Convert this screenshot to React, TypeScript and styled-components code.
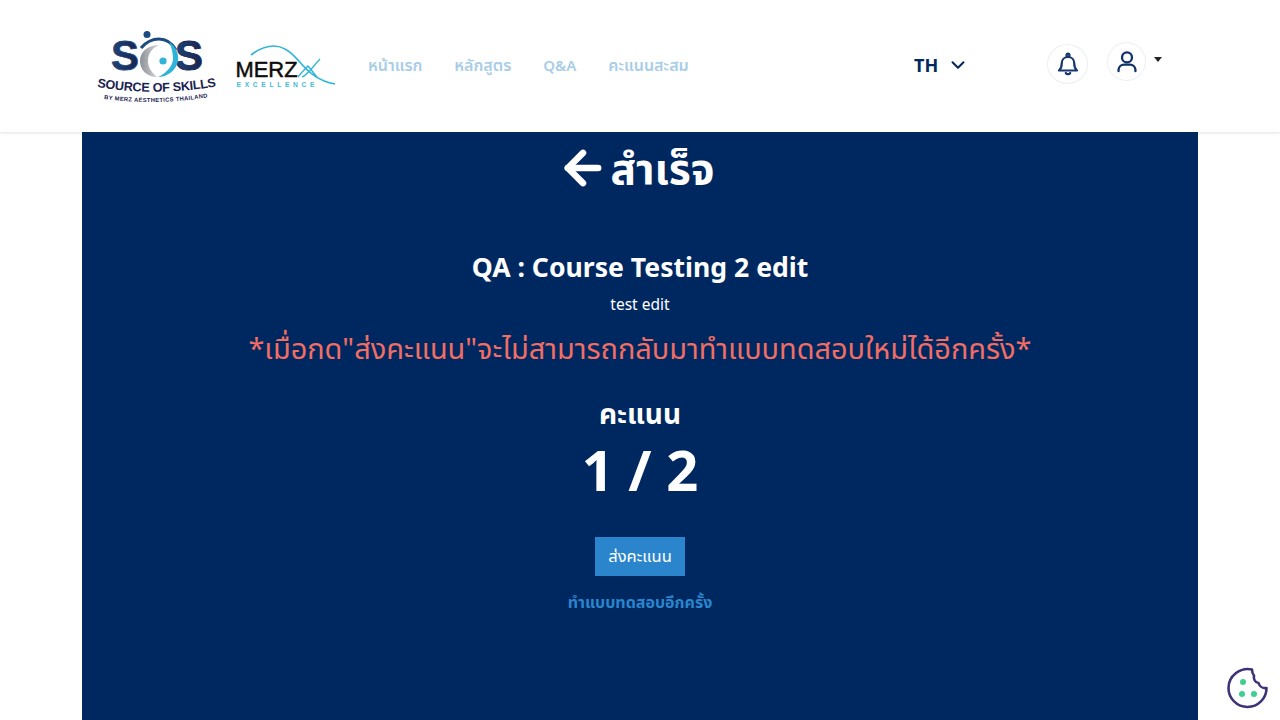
import React from "react";
import styled, { createGlobalStyle } from "styled-components";
import { ArrowLeft, ChevronDown } from "lucide-react";

const FONT = `"Noto Sans", "Noto Sans Thai", "Open Sans", "DejaVu Sans", sans-serif`;

const GlobalStyle = createGlobalStyle`
    html, body {
        margin: 0;
        padding: 0;
        background: #fff;
        font-family: ${FONT};
        overflow: hidden;
    }
`;

const SosLogo = () => (
    <SosMark width="122" height="76" viewBox="0 0 122 76">
        <defs>
            <linearGradient id="navyGrad" x1="0" x2="1" y1="0" y2="0">
                <stop offset="0" stopColor="#1d4578" />
                <stop offset="1" stopColor="#18244f" />
            </linearGradient>
            <linearGradient id="silverGrad" x1="0" x2="1" y1="0" y2="0">
                <stop offset="0" stopColor="#8d9097" />
                <stop offset="1" stopColor="#dcdde0" />
            </linearGradient>
            <path id="sosArc1" d="M0 57 Q60 67 121 56" />
            <path id="sosArc2" d="M7 69 Q60 76 112 67" />
        </defs>
        <text x="14" y="39.5" fontFamily="Liberation Sans" fontWeight="700" fontSize="42" stroke="#1d4578" strokeWidth="0.8" fill="url(#navyGrad)">S</text>
        <text x="78" y="39.5" fontFamily="Liberation Sans" fontWeight="700" fontSize="42" stroke="#18244f" strokeWidth="0.8" fill="url(#navyGrad)">S</text>
        <circle cx="50" cy="4.5" r="3.5" fill="#1d4a80" />
        <path d="M63 15 C50 15 43 22 43 31 C43 40 50 47 60 47 C54 42 51 37 51 31 C51 23 56 17 63 15 Z" fill="url(#silverGrad)" />
        <path d="M44 18 C50 11 56 9 62 9 C69 9 75 13 79 20" fill="none" stroke="#1d4a80" strokeWidth="3" />
        <path d="M72 12 C80 17 82 25 81 31 C79 41 70 47 61 47 C68 44 75 37 76 30 C76 24 75 18 72 12 Z" fill="#2fb4d8" />
        <circle cx="66" cy="31" r="3.6" fill="#2fb4d8" />
        <text fontFamily="Liberation Sans" fontWeight="700" fontSize="12.6" fill="#1b2350">
            <textPath href="#sosArc1" textLength="120">SOURCE OF SKILLS</textPath>
        </text>
        <text fontFamily="Liberation Sans" fontWeight="700" fontSize="5.8" fill="#1b2350">
            <textPath href="#sosArc2" textLength="104">BY MERZ AESTHETICS THAILAND</textPath>
        </text>
    </SosMark>
);

const MerzLogo = () => (
    <svg width="100" height="44" viewBox="0 0 100 44">
        <path d="M15 11 C24 4 30 2 38 2 C48 2 56 9 62 16 C72 28 82 37 99 40" fill="none" stroke="#2fb4d8" strokeWidth="1.7" />
        <text x="-0.5" y="33" fontFamily="Liberation Sans" fontSize="22.5" textLength="62" lengthAdjust="spacingAndGlyphs" stroke="#0c0c0c" strokeWidth="0.5" fill="#0c0c0c">MERZ</text>
        <path d="M62 33 C65 29 69 25 72 22 C75 25 78 30 81 33" fill="none" stroke="#2fb4d8" strokeWidth="1.4" />
        <path d="M66 33 C72 31 77 22 84 15" fill="none" stroke="#2fb4d8" strokeWidth="1.3" />
        <text x="0.5" y="42.5" fontFamily="Liberation Sans" fontWeight="700" fontSize="6.6" textLength="78" fill="#3bbcd8">EXCELLENCE</text>
    </svg>
);

const BellIcon = () => (
    <svg width="24" height="24" viewBox="0 0 24 24" fill="none" stroke="#17376e" strokeWidth="2.2" strokeLinecap="round" strokeLinejoin="round">
        <circle cx="12" cy="3.2" r="1.5" />
        <path d="M3 18.5 H21 C18.8 16.5 18.2 14.5 18.2 11 C18.2 7.5 15.5 5 12 5 C8.5 5 5.8 7.5 5.8 11 C5.8 14.5 5.2 16.5 3 18.5 Z" />
        <path d="M9.8 21 C10.5 22.6 13.5 22.6 14.2 21" />
    </svg>
);

const UserIcon = () => (
    <svg width="26" height="26" viewBox="0 0 24 24" fill="none" stroke="#0f3068" strokeWidth="2.1" strokeLinecap="round" strokeLinejoin="round">
        <circle cx="12" cy="7.8" r="4.6" />
        <path d="M4.2 20.5 V19 A5 5 0 0 1 9.2 14.5 H14.8 A5 5 0 0 1 19.8 19 V20.5" />
    </svg>
);

const CookieIcon = () => (
    <svg width="42" height="42" viewBox="0 0 42 42">
        <path
            d="M25 2.5 C13 0 1.5 9 1.5 21 C1.5 31.5 10 40 20.5 40 C31 40 39.5 31.5 39.5 21 C36 21.5 32.5 19.5 31.5 16 C28 15.5 26.5 12 27 8.5 C25.5 7 25 5 25 2.5 Z"
            fill="none"
            stroke="#3c3477"
            strokeWidth="2.6"
            strokeLinejoin="round"
        />
        <circle cx="16" cy="15" r="3" fill="#3fcf8e" />
        <circle cx="15" cy="27" r="3" fill="#3fcf8e" />
        <circle cx="27" cy="27" r="3" fill="#3fcf8e" />
    </svg>
);

const App = () => {
    return (
        <>
            <GlobalStyle />
            <Header>
                <LogoGroup>
                    <SosLogo />
                    <MerzLogo />
                </LogoGroup>
                <Nav>
                    <NavLink>หน้าแรก</NavLink>
                    <NavLink>หลักสูตร</NavLink>
                    <NavLink $latin>Q&amp;A</NavLink>
                    <NavLink>คะแนนสะสม</NavLink>
                </Nav>
                <LangPicker>
                    TH
                    <ChevronDown size={22} strokeWidth={2.2} />
                </LangPicker>
                <BellButton>
                    <BellIcon />
                </BellButton>
                <UserGroup>
                    <UserButton>
                        <UserIcon />
                    </UserButton>
                    <Caret />
                </UserGroup>
            </Header>
            <Main>
                <Title>
                    <ArrowLeft size={52} strokeWidth={3} />
                    สำเร็จ
                </Title>
                <CourseName>QA : Course Testing 2 edit</CourseName>
                <CourseDetail>test edit</CourseDetail>
                <Warning>*เมื่อกด"ส่งคะแนน"จะไม่สามารถกลับมาทำแบบทดสอบใหม่ได้อีกครั้ง*</Warning>
                <ScoreLabel>คะแนน</ScoreLabel>
                <ScoreValue>1 / 2</ScoreValue>
                <SubmitButton>ส่งคะแนน</SubmitButton>
                <RetryLink>ทำแบบทดสอบอีกครั้ง</RetryLink>
            </Main>
            <CookieBadge>
                <CookieIcon />
            </CookieBadge>
        </>
    );
};

export default App;

const Header = styled.header`
    display: flex;
    align-items: center;
    height: 132px;
    box-sizing: border-box;
    padding: 0 118px 0 97px;
    background: #fff;
    box-shadow: 0 1px 3px rgba(0, 0, 0, 0.12);
`;

const LogoGroup = styled.div`
    display: flex;
    align-items: center;
    gap: 17px;
    width: 271px;
    flex-shrink: 0;
`;

const SosMark = styled.svg`
    margin-top: 3px;
`;

const Nav = styled.nav`
    display: flex;
    align-items: center;
    gap: 32px;
    width: 546px;
    flex-shrink: 0;
    margin-top: -2px;
`;

const NavLink = styled.a<{ $latin?: boolean }>`
    color: #a8cde8;
    font-size: ${(p) => (p.$latin ? 15 : 16)}px;
    font-weight: 600;
    line-height: 24px;
`;

const LangPicker = styled.div`
    display: flex;
    align-items: center;
    gap: 9px;
    width: 133px;
    flex-shrink: 0;
    margin-top: -3px;
    color: #002860;
    font-size: 18px;
    font-weight: 700;
`;

const RoundButton = styled.div`
    display: flex;
    align-items: center;
    justify-content: center;
    border: 1px solid #eceef1;
    border-radius: 50%;
    box-sizing: border-box;
    flex-shrink: 0;
`;

const BellButton = styled(RoundButton)`
    width: 41px;
    height: 40px;
    margin-top: -5px;
`;

const UserButton = styled(RoundButton)`
    width: 39px;
    height: 39px;
`;

const UserGroup = styled.div`
    display: flex;
    align-items: flex-start;
    gap: 8px;
    margin-left: 19px;
    margin-top: -9px;
`;

const Caret = styled.span`
    margin-top: 15px;
    border-top: 5px solid #212529;
    border-left: 4.5px solid transparent;
    border-right: 4.5px solid transparent;
`;

const Main = styled.main`
    display: flex;
    flex-direction: column;
    align-items: center;
    box-sizing: border-box;
    width: 1116px;
    height: 588px;
    margin: 0 82px;
    background: #002860;
    color: #fff;
`;

const Title = styled.h1`
    display: flex;
    align-items: center;
    gap: 9px;
    margin: 8px 0 0;
    font-size: 42.5px;
    font-weight: 700;
    line-height: 56px;

    svg {
        margin: 0 -8px;
    }
`;

const CourseName = styled.h2`
    margin: 51px 0 0;
    font-size: 26.6px;
    font-weight: 700;
    line-height: 40px;
`;

const CourseDetail = styled.p`
    margin: 5px 0 0;
    font-size: 15.5px;
    line-height: 24px;
`;

const Warning = styled.p`
    margin: 11px 0 0;
    color: #f26d63;
    font-size: 28.9px;
    line-height: 42px;
`;

const ScoreLabel = styled.h3`
    margin: 24px 0 0;
    font-size: 28px;
    font-weight: 700;
    line-height: 40px;
`;

const ScoreValue = styled.div`
    margin-top: 2px;
    font-size: 56px;
    font-weight: 700;
    line-height: 68px;
`;

const SubmitButton = styled.button`
    margin-top: 34px;
    width: 90px;
    height: 39px;
    padding: 0;
    border: none;
    background: #2b85cc;
    color: #fff;
    font-family: ${FONT};
    font-size: 16.5px;
`;

const RetryLink = styled.a`
    margin-top: 14px;
    color: #2b85cc;
    font-size: 16px;
    font-weight: 700;
    line-height: 24px;
`;

const CookieBadge = styled.div`
    position: fixed;
    right: 11px;
    bottom: 11px;
    width: 42px;
    height: 42px;
`;
